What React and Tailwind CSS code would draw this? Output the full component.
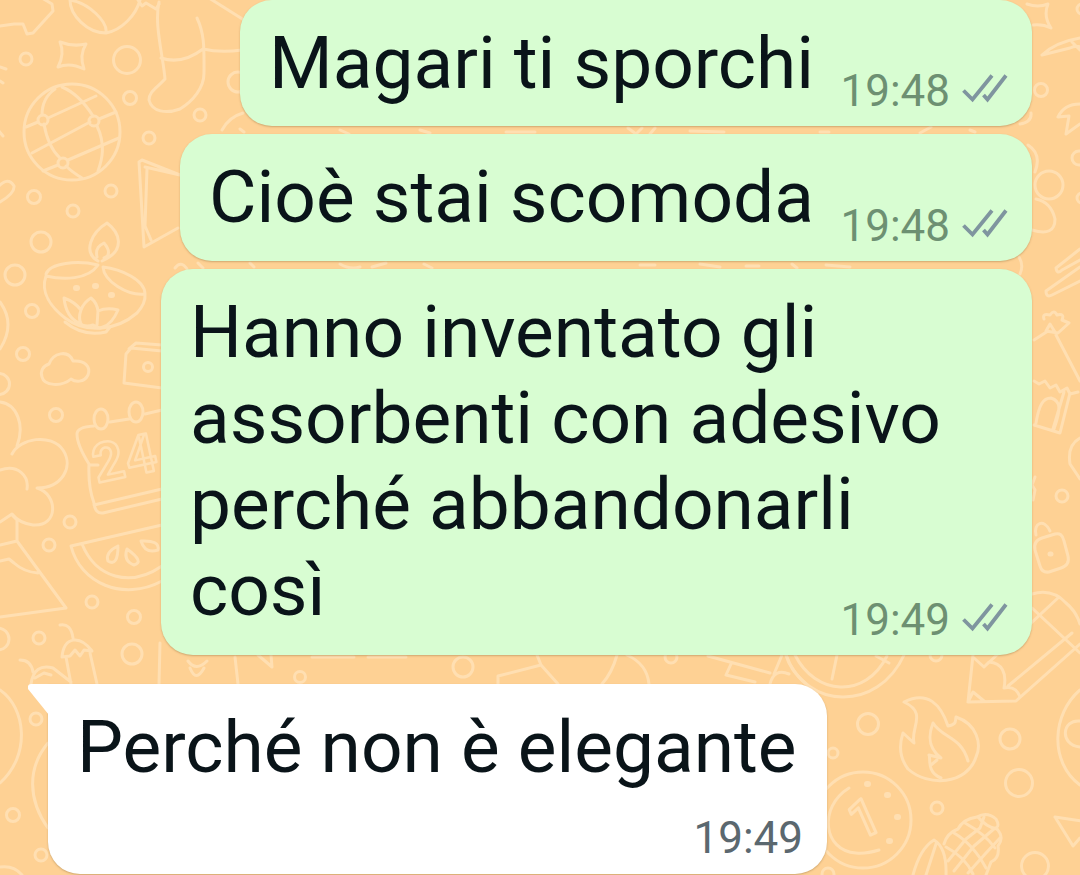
import React from "react";

const messages = [
  { lines: ["Magari ti sporchi"], time: "19:48", size: "w-[792px] h-[126px]" },
  { lines: ["Cioè stai scomoda"], time: "19:48", size: "w-[852px] h-[127px] mt-2" },
  {
    lines: ["Hanno inventato gli", "assorbenti con adesivo", "perché abbandonarli", "così"],
    time: "19:49",
    size: "w-[871px] h-[386px] mt-2",
  },
];

// small rings scattered between the doodles: [x, y, radius]
const rings = [
  [26, 59, 6], [127, 60, 13.5], [130, 98, 6.5], [200, 115, 6], [149, 138, 6], [111, 191, 6],
  [34, 197, 6.5], [73, 211, 6], [238, 82, 10], [41, 242, 10], [15, 275, 10], [32, 311, 6.5],
  [23, 354, 6.5], [-1, 384, 10.5], [56, 415, 6.5], [70, 522, 6], [49, 545, 6], [92, 602, 6],
  [134, 617, 6.5], [39, 638, 6], [-2, 639, 11], [132, 654, 10],
  [36, 719, 6], [13, 815, 6.5], [41, 855, 6], [868, 724, 10.5], [833, 753, 5],
  [1010, 739, 10], [1019, 783, 13.5], [937, 808, 6], [1035, 866, 13.5], [1041, 90, 6.5],
  [1079, 158, 7], [1062, 496, 6], [300, 677, 5.5], [463, 667, 10], [671, 657, 6],
  [936, 655, 6], [828, 874, 6], [1082, 9, 5], [1082, 198, 5],
];

const Wallpaper = () => (
  <svg
    className="absolute inset-0"
    width="1080"
    height="875"
    viewBox="0 0 1080 875"
    fill="none"
    stroke="#ffdfb2"
    strokeWidth="3"
    strokeLinecap="round"
    strokeLinejoin="round"
    aria-hidden="true"
  >
    {rings.map(([x, y, r], i) => (
      <circle key={i} cx={x} cy={y} r={r} />
    ))}

    {/* hat and bowl */}
    <path d="M0 26 L14 24 L23 24 L27 34 L33 33 L53 11 L52 4 L42 -2" />
    <path d="M70 0 C70 15 87 33 106 33 C108 22 89 3 70 0 M106 33 C122 30 136 15 140 0 M138 0 L142 6 L146 3 L156 9 L159 4" />
    {/* four pointed star */}
    <path d="M60 42 Q73 47 86 44 Q79 55 84 69 Q70 62 58 67 Q65 54 60 42 Z" />
    {/* stocking */}
    <path d="M159 2 C154 25 163 55 165 79 C158 87 149 91 149 100 C152 112 166 114 180 109 C193 101 204 88 204 73 C204 50 205 35 197 18 M161 58 Q182 65 203 49 Q220 53 242 50 M209 -2 L244 20" />
    <path d="M0 67 L6 69 M0 81 L3 83 M-2 130 L3 136 M-2 187 Q8 176 14 186 Q15 193 0 202" />

    {/* globe */}
    <circle cx="72" cy="132" r="48" />
    <path d="M26 127 L38 122 M48 118 L96 96 M32 153 L90 122 M99 119 L116 112 M43 171 L58 165 M68 160 L119 138" />
    <path d="M55 89 Q42 98 42 115 M44 124 Q48 147 60 158 M66 166 Q72 172 82 178 M62 87 Q79 94 93 116 M97 126 C106 145 102 160 98 171" />
    <circle cx="43" cy="120" r="5" />
    <circle cx="94" cy="121" r="5" />
    <circle cx="63" cy="163" r="5" />

    {/* greeting card */}
    <path d="M222 130 Q229 117 243 113 M180 175 L142 160 L139 162 L144 247 L178 228 M147 169 L145 226 L151 240 M145 167 L180 175" />
    <path d="M175 268 Q181 260 187 269" />

    {/* diya lamp */}
    <path d="M98 261 C82 252 92 232 107 223 C119 232 127 250 102 261 M97 257 C95 248 100 245 104 243 C110 250 110 256 104 258" />
    <path d="M46 274 C50 263 77 260 98 265 C88 280 63 280 46 276 C40 293 52 308 65 318 C85 333 115 332 137 313 Q146 303 145 294 C127 296 104 281 103 267 C121 269 145 280 145 294" />
    <path d="M64 298 Q75 302 81 310 Q84 302 91 298 Q97 303 98 311 Q107 307 118 310 Q112 324 103 327 Q98 329 93 325 Q85 328 79 323 Q66 317 64 298 M81 310 Q78 318 81 324 M98 311 L97 325 M65 322 Q83 337 106 332 L110 327" />
    <path d="M76 288 h1 M95 286 h1 M111 295 h1" strokeWidth="6" />
    <path d="M0 302 Q16 324 0 349" />

    {/* cloud */}
    <path d="M49 364 C53 353 68 349 73 361 C85 360 91 367 88 375 C84 383 75 382 71 379 C62 387 44 386 42 377 C40 371 43 366 49 364 Z" />
    {/* camera */}
    <path d="M162 351 L131 348 L126 354 L124 383 L162 388 M129 349 L136 343 L162 345" />
    <circle cx="148" cy="367" r="4.5" />

    {/* ice cream */}
    <path d="M0 402 C17 404 25 425 17 446 M12 454 C20 438 51 433 63 450 C74 467 62 488 37 488 C58 494 59 527 33 525 Q19 523 12 514 L0 522 M0 470 C18 464 29 476 27 489 M13 516 L17 520 L17 541 L0 545 M17 541 L66 608 L0 617 M0 561 L9 559 L14 563 Q24 572 38 573" />

    {/* calendar */}
    <path d="M94 426 Q77 427 77 434 Q77 445 89 464 Q88 487 94 503 Q95 514 103 513 L162 499 M94 505 L162 489 M110 422 L129 419 M145 414 L162 410 M89 465 L98 465" />
    <ellipse cx="101" cy="419" rx="7" ry="10" />
    <ellipse cx="136" cy="412" rx="7" ry="10" />
    <text
      x="97"
      y="483"
      fontSize="54"
      strokeWidth="2.5"
      letterSpacing="2"
      className="font-['Roboto',sans-serif] font-bold"
      transform="rotate(-12 97 483)"
    >
      24
    </text>

    {/* watermelon */}
    <path d="M162 525 L71 546 C80 583 123 602 162 581 M82 544 C96 578 130 588 162 566" />
    <path d="M118 546 Q105 552 108 561 Q118 567 118 546 M127 549 Q123 561 134 565 Q145 562 127 549 M141 541 Q145 554 158 550 Q160 540 141 541" />

    {/* radishes */}
    <path d="M60 625 Q71 623 73 638 M62 657 C64 636 80 635 92 651 L84 650 L80 656 L75 650 L70 656 Z M66 657 L71 684 M90 653 L97 684 M20 660 Q31 660 33 672 M31 684 Q34 663 53 668 L71 682 M35 678 L44 673 L51 675" />
    <path d="M160 643 L159 684 M0 690 C26 708 31 755 0 783 M48 743 C27 768 28 800 48 828 M0 867 Q14 865 22 875" />

    {/* strip between the bubbles */}
    <path d="M235 657 L238 684 M188 661 Q196 672 207 661 M190 668 Q196 683 204 668 M258 655 L272 667 L271 655 M312 657 H354 M368 657 H406" />
    <path d="M498 684 L498 676 L541 665 L537 655 M541 665 L558 684 M617 655 Q612 673 602 684 M627 655 Q647 664 649 684 M708 656 L770 673 M731 664 L726 675 L755 682 M770 684 Q774 668 789 674 M782 655 L774 674 M786 655 Q790 670 806 684" />

    {/* pizza */}
    <path d="M795 655 C815 695 865 700 887 656 M786 655 C806 710 878 712 904 655 M837 655 L832 679 M876 656 L889 663" />

    {/* flame */}
    <path d="M904 702 C928 690 941 705 948 726 C957 724 955 722 956 717 C977 724 982 744 976 757 C967 785 928 787 908 769 C899 757 899 745 903 733 L914 743 C910 728 928 713 904 702 Z" />
    <path d="M941 778 C926 772 931 758 929 755 L941 758 C928 748 928 736 933 723 C942 738 961 736 968 761 M937 760 L931 765" />

    {/* coin */}
    <circle cx="863" cy="820" r="48" />
    <path d="M849 788 C818 807 823 851 856 853 Q866 854 879 850" />
    <text
      x="850"
      y="838"
      fontSize="52"
      strokeWidth="3"
      className="font-['Roboto',sans-serif] font-medium"
      transform="rotate(-24 860 820)"
    >
      1
    </text>
    <path d="M867 784 h1 M887 795 h1 M897 817 h1 M889 841 h1" strokeWidth="6" />

    {/* corn */}
    <path d="M913 875 C917 860 924 846 934 840 Q947 848 946 875 M926 875 L936 844 M944 844 Q947 833 958 829 Q963 819 977 817 Q987 811 996 819 Q1000 826 996 828 Q1005 837 998 846 Q1000 858 991 862 L986 875" />
    <path d="M954 833 Q973 844 986 868 M965 823 Q985 834 995 848 M978 817 Q986 827 997 829 M946 847 Q965 857 973 874 M948 861 L966 839 L980 828 L984 817 M954 871 L974 846 L995 828 M968 873 L986 853 L1000 838" />

    {/* pencil */}
    <path d="M973 655 L968 702 L1016 701 L1080 644 M968 702 L973 692 L984 701 M974 658 L984 667 L989 662 C1002 663 1007 673 1004 688 C1015 686 1018 692 1020 697 M984 667 L1059 597 M1008 686 L1072 633" />
    <path d="M1080 690 C1052 714 1049 762 1080 785 M1080 721 C1062 719 1059 745 1080 747 M1055 817 L1082 821 M1055 817 L1073 846 L1080 838" />

    {/* right edge */}
    <path d="M1027 4 Q1038 8 1048 4 Q1043 16 1051 28 Q1043 24 1033 25 M1042 55 Q1056 42 1080 38 M1042 55 L1070 48 Q1076 45 1080 47 M1072 42 L1080 50" />
    <path d="M1080 104 Q1064 104 1058 117 L1069 116 L1066 134 L1080 124 M1028 145 Q1042 154 1035 172" />
    <circle cx="1049" cy="185" r="14" />
    <path d="M1036 199 Q1051 202 1055 219 Q1055 237 1032 230 M1019 257 Q1024 265 1020 274 M1031 113 Q1032 122 1020 124" />
    <path d="M1080 249 L1056 268 Q1057 275 1062 270 L1080 260 M1080 267 L1046 291 Q1046 298 1052 295 L1080 281" />
    <path d="M1044 319 Q1042 313 1050 315 Q1054 309 1057 315 Q1065 313 1062 320 L1069 323 L1058 333 L1046 331 L1050 324 L1055 332 M1048 331 L1034 340 M1056 335 L1080 381" />
    <path d="M1034 381 L1039 384 L1045 381 L1050 388 L1056 385 L1060 392 L1067 388 L1070 394 L1078 392 M1070 393 L1060 433 L1034 425 M1064 392 L1053 429 M1036 423 C1039 405 1043 398 1051 398 C1061 401 1061 409 1054 429" />
    <path d="M1080 438 Q1067 445 1070 464 L1080 479 M1035 477 L1032 485 L1035 490 L1033 500" />
    <path d="M1036 535 C1033 523 1044 518 1050 531 M1042 538 L1055 534 Q1062 532 1064 541 L1068 556 Q1070 565 1061 568 L1049 572 Q1042 573 1040 566 L1035 550 Q1033 541 1042 538" />
    <path d="M1050 554 h1" strokeWidth="5" />
    <path d="M1032 594 Q1052 588 1066 603 Q1076 611 1080 624 M1032 608 L1080 653" />

    {/* slivers in the gaps */}
    <path d="M240 129 L244 132 M340 130 L349 134 M420 130 L430 133 M506 132 H535 M628 128 L636 134 L642 128 M650 134 L655 128 M690 131 L724 132 M820 132 H829 M920 133 L931 127 M970 130 L975 132 M198 263 L203 268 M250 263 L254 267 M340 264 Q350 270 360 267 M372 267 L386 263 M424 264 L432 268 M640 265 H655 M700 264 L720 267 M746 266 H759 M792 264 L797 268 M826 265 L850 267" />
  </svg>
);

const Ticks = () => (
  <svg
    className="mb-[22px] ml-3 shrink-0"
    width="46"
    height="30"
    viewBox="0 0 46 30"
    fill="none"
    stroke="#7f959f"
    strokeWidth="3.8"
    aria-hidden="true"
  >
    <path d="M1.5 16.5 L10.5 25.5 L30 1.5" />
    <path d="M21.5 21 L25.5 25.5 L44 1.5" />
  </svg>
);

const Message = ({ lines, time, size }) => (
  <div
    className={`${size} flex flex-col rounded-[32px] bg-[#d8fdd2] pt-5 pr-6 pl-[29px] shadow-[0_1px_2px_rgba(120,90,40,0.35)]`}
  >
    {lines.slice(0, -1).map((line) => (
      <p key={line} className="h-[86px] whitespace-nowrap">{line}</p>
    ))}
    <div className="flex flex-1 justify-between">
      <p className="whitespace-nowrap">{lines[lines.length - 1]}</p>
      <div className="flex items-end">
        <span className="mb-[9px] text-[44px] leading-[52px] text-[#6d9072]">{time}</span>
        <Ticks />
      </div>
    </div>
  </div>
);

export default function App() {
  return (
    <div className="relative h-[875px] w-[1080px] overflow-hidden bg-[#fed194] font-['Roboto',sans-serif] text-[73px] leading-[86px] text-[#0a1419]">
      <Wallpaper />
      <main className="relative flex flex-col items-end pr-12">
        {messages.map((message) => (
          <Message key={message.lines[0]} {...message} />
        ))}

        <div className="relative mt-[29px] ml-12 flex h-[190px] w-[779px] flex-col self-start rounded-[32px] rounded-tl-none bg-white pt-5 pr-6 pl-[29px] shadow-[0_1px_2px_rgba(120,90,40,0.35)]">
          <svg className="absolute top-0 -left-[20px]" width="21" height="32" viewBox="0 0 21 32" fill="#fff">
            <path d="M21 0 H3 Q-1 0 0 5 L21 31 Z" />
          </svg>
          <p className="whitespace-nowrap">Perché non è elegante</p>
          <span className="mt-[22px] self-end text-[44px] leading-[52px] text-[#5b686f]">19:49</span>
        </div>
      </main>
    </div>
  );
}
